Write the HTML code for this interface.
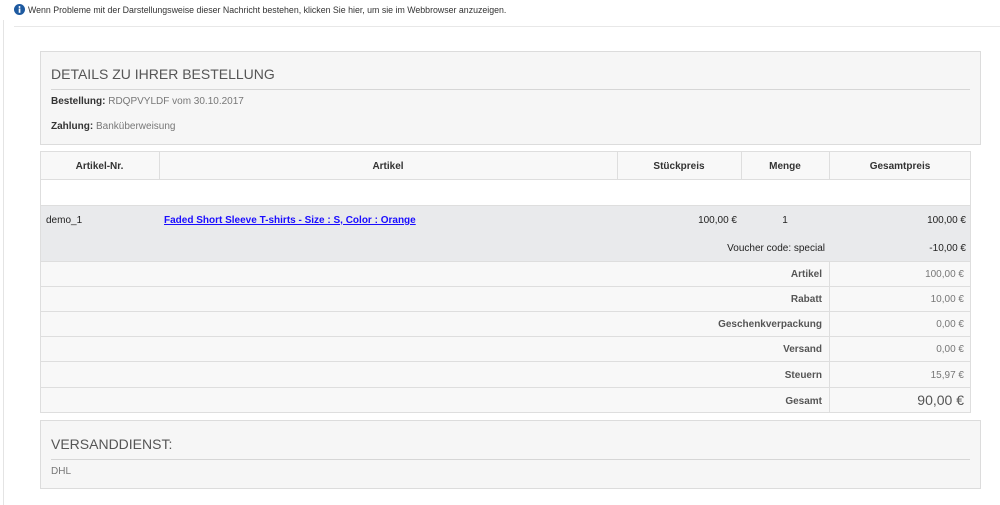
<!DOCTYPE html>
<html><head><meta charset="utf-8"><style>
*{margin:0;padding:0;box-sizing:border-box}
body{width:1000px;height:505px;background:#fff;font-family:"Liberation Sans",Arial,sans-serif;position:relative;overflow:hidden;color:#333}
.a{position:absolute}
.box{position:absolute;background:#f6f6f6;border:1px solid #dcdcdc}
.h{position:absolute;font-size:14px;color:#555}
.hr{position:absolute;height:1px;background:#d6d6d6}
.t{position:absolute;font-size:10px;color:#777}
.t b{color:#333}
.cell{position:absolute;font-size:10px;display:flex;align-items:center}
.hl{position:absolute;height:1px;background:#dedede}
.vl{position:absolute;width:1px;background:#dedede}
</style></head><body>
<div class="a" style="left:3px;top:20px;width:1px;height:485px;background:#e4e4e4"></div>
<div class="a" style="left:14px;top:26px;width:986px;height:1px;background:#e8e8e8"></div>
<svg class="a" style="left:14px;top:4px" width="11" height="11" viewBox="0 0 11 11"><circle cx="5.5" cy="5.5" r="5.5" fill="#1e5aa0"/><rect x="4.7" y="4.5" width="1.7" height="4.3" fill="#fff"/><circle cx="5.5" cy="3" r="0.95" fill="#fff"/></svg>
<div class="a" style="left:28px;top:5px;font-size:8.8px;color:#333">Wenn Probleme mit der Darstellungsweise dieser Nachricht bestehen, klicken Sie hier, um sie im Webbrowser anzuzeigen.</div>

<div class="box" style="left:40px;top:51px;width:941px;height:94px"></div>
<div class="h" style="left:51px;top:66px">DETAILS ZU IHRER BESTELLUNG</div>
<div class="hr" style="left:51px;top:89px;width:919px"></div>
<div class="t" style="left:51px;top:96px"><b>Bestellung:</b> RDQPVYLDF vom 30.10.2017</div>
<div class="t" style="left:51px;top:121px"><b>Zahlung:</b> Banküberweisung</div>

<div class="a" style="left:40px;top:151px;width:931px;height:28px;background:#f8f8f8"></div>
<div class="a" style="left:40px;top:205px;width:931px;height:56px;background:#e9eaec"></div>
<div class="a" style="left:40px;top:261px;width:931px;height:152px;background:#f8f8f8"></div>
<div class="a" style="left:40px;top:151px;width:931px;height:262px;border:1px solid #dedede"></div>
<div class="hl" style="left:40px;top:179px;width:931px"></div>
<div class="hl" style="left:40px;top:205px;width:931px"></div>
<div class="hl" style="left:40px;top:261px;width:931px"></div>
<div class="hl" style="left:40px;top:286px;width:931px"></div>
<div class="hl" style="left:40px;top:311px;width:931px"></div>
<div class="hl" style="left:40px;top:336px;width:931px"></div>
<div class="hl" style="left:40px;top:361px;width:931px"></div>
<div class="hl" style="left:40px;top:387px;width:931px"></div>
<div class="vl" style="left:159px;top:151px;height:28px"></div>
<div class="vl" style="left:617px;top:151px;height:28px"></div>
<div class="vl" style="left:741px;top:151px;height:28px"></div>
<div class="vl" style="left:829px;top:151px;height:28px"></div>
<div class="vl" style="left:829px;top:261px;height:152px"></div>

<div class="cell" style="left:40px;top:152px;width:119px;height:28px;justify-content:center;font-weight:bold">Artikel-Nr.</div>
<div class="cell" style="left:159px;top:152px;width:458px;height:28px;justify-content:center;font-weight:bold">Artikel</div>
<div class="cell" style="left:617px;top:152px;width:124px;height:28px;justify-content:center;font-weight:bold">Stückpreis</div>
<div class="cell" style="left:741px;top:152px;width:88px;height:28px;justify-content:center;font-weight:bold">Menge</div>
<div class="cell" style="left:829px;top:152px;width:142px;height:28px;justify-content:center;font-weight:bold">Gesamtpreis</div>

<div class="cell" style="left:46px;top:212px;height:16px;color:#222">demo_1</div>
<div class="cell" style="left:164px;top:212px;height:16px;color:#1a0dff;font-weight:bold;text-decoration:underline">Faded Short Sleeve T-shirts - Size : S, Color : Orange</div>
<div class="cell" style="left:617px;top:212px;width:120px;height:16px;justify-content:flex-end;color:#222">100,00 €</div>
<div class="cell" style="left:741px;top:212px;width:88px;height:16px;justify-content:center;color:#222">1</div>
<div class="cell" style="left:829px;top:212px;width:137px;height:16px;justify-content:flex-end;color:#222">100,00 €</div>
<div class="cell" style="left:617px;top:240px;width:208px;height:16px;justify-content:flex-end;color:#222">Voucher code: special</div>
<div class="cell" style="left:829px;top:240px;width:137px;height:16px;justify-content:flex-end;color:#222">-10,00 €</div>

<div class="cell" style="left:600px;top:262px;width:222px;height:25px;justify-content:flex-end;font-weight:bold;color:#555">Artikel</div>
<div class="cell" style="left:829px;top:262px;width:135px;height:25px;justify-content:flex-end;color:#777">100,00 €</div>
<div class="cell" style="left:600px;top:287px;width:222px;height:25px;justify-content:flex-end;font-weight:bold;color:#555">Rabatt</div>
<div class="cell" style="left:829px;top:287px;width:135px;height:25px;justify-content:flex-end;color:#777">10,00 €</div>
<div class="cell" style="left:600px;top:312px;width:222px;height:25px;justify-content:flex-end;font-weight:bold;color:#555">Geschenkverpackung</div>
<div class="cell" style="left:829px;top:312px;width:135px;height:25px;justify-content:flex-end;color:#777">0,00 €</div>
<div class="cell" style="left:600px;top:337px;width:222px;height:25px;justify-content:flex-end;font-weight:bold;color:#555">Versand</div>
<div class="cell" style="left:829px;top:337px;width:135px;height:25px;justify-content:flex-end;color:#777">0,00 €</div>
<div class="cell" style="left:600px;top:362px;width:222px;height:26px;justify-content:flex-end;font-weight:bold;color:#555">Steuern</div>
<div class="cell" style="left:829px;top:362px;width:135px;height:26px;justify-content:flex-end;color:#777">15,97 €</div>
<div class="cell" style="left:600px;top:388px;width:222px;height:26px;justify-content:flex-end;font-weight:bold;color:#555">Gesamt</div>
<div class="cell" style="left:829px;top:387px;width:135px;height:26px;justify-content:flex-end;color:#555;font-size:14px">90,00 €</div>

<div class="box" style="left:40px;top:420px;width:941px;height:69px"></div>
<div class="h" style="left:51px;top:436px">VERSANDDIENST:</div>
<div class="hr" style="left:51px;top:459px;width:919px"></div>
<div class="t" style="left:51px;top:466px">DHL</div>
</body></html>
